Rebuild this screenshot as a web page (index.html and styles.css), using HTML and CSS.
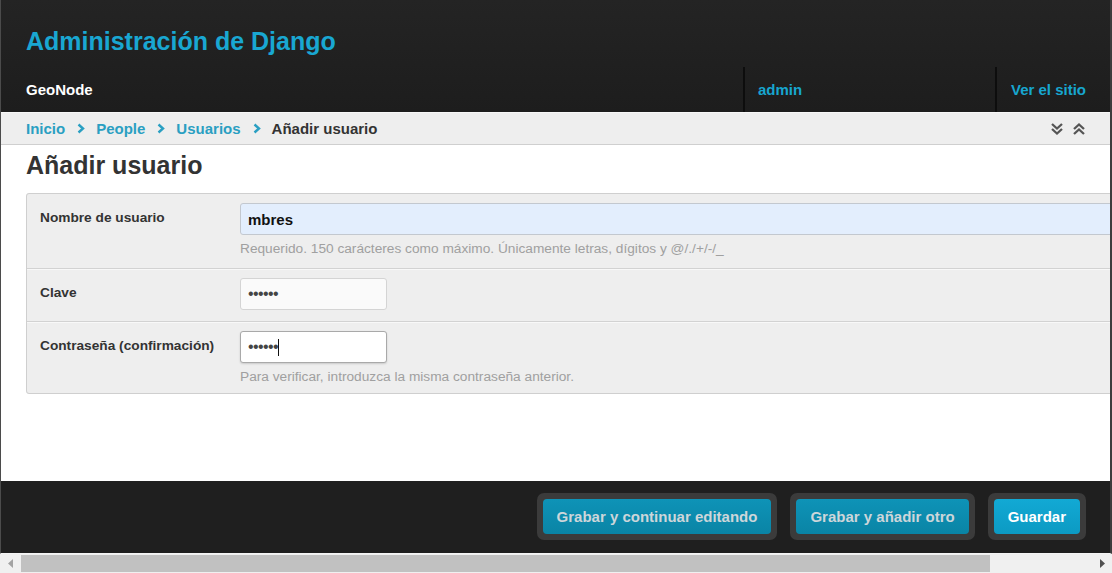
FILE: index.html
```html
<!DOCTYPE html>
<html lang="es">
<head>
<meta charset="utf-8">
<title>Añadir usuario | Administración de Django</title>
<link rel="stylesheet" href="styles.css">
</head>
<body>
<div class="window">
  <div class="frame">
    <header class="header">
      <div class="branding">
        <h1 class="site-name">Administración de Django</h1>
      </div>
      <nav class="nav">
        <div class="nav-home">GeoNode</div>
        <div class="nav-cell nav-user"><a href="#">admin</a></div>
        <div class="nav-cell nav-site"><a href="#">Ver el sitio</a></div>
      </nav>
    </header>

    <div class="breadcrumbs">
      <a href="#">Inicio</a>
      <svg class="sep" width="8" height="11" viewBox="0 0 8 11"><path d="M1.5 1.5 L6 5.5 L1.5 9.5" fill="none" stroke="#2a9fc2" stroke-width="2.4"/></svg>
      <a href="#">People</a>
      <svg class="sep" width="8" height="11" viewBox="0 0 8 11"><path d="M1.5 1.5 L6 5.5 L1.5 9.5" fill="none" stroke="#2a9fc2" stroke-width="2.4"/></svg>
      <a href="#">Usuarios</a>
      <svg class="sep" width="8" height="11" viewBox="0 0 8 11"><path d="M1.5 1.5 L6 5.5 L1.5 9.5" fill="none" stroke="#2a9fc2" stroke-width="2.4"/></svg>
      <span class="current">Añadir usuario</span>
      <div class="bc-tools">
        <svg width="14" height="14" viewBox="0 0 14 14"><path d="M2 2 L7 6.5 L12 2 M2 7 L7 11.5 L12 7" fill="none" stroke="#555" stroke-width="2.3"/></svg>
        <svg width="14" height="14" viewBox="0 0 14 14"><path d="M2 7 L7 2.5 L12 7 M2 12 L7 7.5 L12 12" fill="none" stroke="#555" stroke-width="2.3"/></svg>
      </div>
    </div>

    <main class="content">
      <h2 class="page-title">Añadir usuario</h2>
      <form class="form">
        <fieldset class="fieldset">
          <div class="row">
            <label class="label" for="u">Nombre de usuario</label>
            <div class="field">
              <input id="u" class="input input-wide" type="text" value="mbres">
              <div class="help">Requerido. 150 carácteres como máximo. Únicamente letras, dígitos y @/./+/-/_</div>
            </div>
          </div>
          <div class="row">
            <label class="label" for="p1">Clave</label>
            <div class="field">
              <input id="p1" class="input input-short" type="password" value="secret">
            </div>
          </div>
          <div class="row">
            <label class="label" for="p2">Contraseña (confirmación)</label>
            <div class="field">
              <div class="caret-wrap">
                <input id="p2" class="input input-short input-focus" type="password" value="secret">
                <span class="caret"></span>
              </div>
              <div class="help">Para verificar, introduzca la misma contraseña anterior.</div>
            </div>
          </div>
        </fieldset>
      </form>
    </main>

    <footer class="submit-row">
      <div class="btn-frame"><button type="button" class="btn">Grabar y continuar editando</button></div>
      <div class="btn-frame"><button type="button" class="btn">Grabar y añadir otro</button></div>
      <div class="btn-frame"><button type="button" class="btn btn-default">Guardar</button></div>
    </footer>
  </div>
  <div class="hscroll">
    <div class="sb-btn"><svg width="6" height="9" viewBox="0 0 6 9"><path d="M5 0 L0 4.5 L5 9 Z" fill="#a3a3a3"/></svg></div>
    <div class="sb-thumb"></div>
    <div class="sb-track"></div>
    <div class="sb-btn sb-right"><svg width="6" height="9" viewBox="0 0 6 9"><path d="M1 0 L6 4.5 L1 9 Z" fill="#505050"/></svg></div>
  </div>
</div>
</body>
</html>
```

FILE: styles.css
```css
* { box-sizing: border-box; }

html, body {
  margin: 0;
  padding: 0;
  background: #ffffff;
}

body {
  font-family: "Liberation Sans", Arial, sans-serif;
  color: #333;
}

.window {
  width: 1112px;
  height: 573px;
  overflow: hidden;
  display: flex;
  flex-direction: column;
}

.frame {
  height: 554px;
  border-left: 1px solid #4b4b4b;
  border-right: 2px solid #3d3d3d;
  display: flex;
  flex-direction: column;
  overflow: hidden;
  border-bottom: 1px solid #f4f4f4;
}

/* Header */
.header {
  background: linear-gradient(#242424, #1d1d1d);
  height: 112px;
  display: flex;
  flex-direction: column;
  flex-shrink: 0;
}

.branding {
  height: 67px;
  padding: 26px 0 0 25px;
}

.site-name {
  margin: 0;
  font-size: 25px;
  line-height: 30px;
  font-weight: bold;
  color: #19a7d2;
}

.nav {
  flex: 1;
  display: flex;
  align-items: stretch;
}

.nav-home {
  flex: 1;
  padding: 0 0 1px 25px;
  display: flex;
  align-items: center;
  color: #fff;
  font-weight: bold;
  font-size: 15px;
}

.nav-cell {
  display: flex;
  align-items: center;
  border-left: 2px solid #0d0d0d;
  font-size: 15px;
  font-weight: bold;
  padding-bottom: 1px;
}

.nav-cell a {
  color: #17a6cf;
  text-decoration: none;
}

.nav-user {
  width: 252px;
  padding-left: 13px;
}

.nav-site {
  width: 115px;
  padding-left: 14px;
}

/* Breadcrumbs */
.breadcrumbs {
  height: 33px;
  flex-shrink: 0;
  background: #eeeeee;
  border-top: 1px solid #f7f7f7;
  border-bottom: 1px solid #cfcfcf;
  display: flex;
  align-items: center;
  padding-left: 25px;
  font-size: 15px;
  font-weight: bold;
}

.breadcrumbs a {
  color: #2a9fc2;
  text-decoration: none;
}

.breadcrumbs .sep {
  margin: 0 11px 0 12px;
}

.breadcrumbs .current {
  color: #333;
}

.bc-tools {
  margin-left: auto;
  margin-right: 24px;
  display: flex;
  gap: 8px;
}

/* Content */
.content {
  flex: 1;
  background: #fff;
  padding: 6px 0 0 25px;
}

.page-title {
  margin: 0 0 14px 0;
  font-size: 25px;
  line-height: 28px;
  font-weight: bold;
  color: #333;
}

.form {
  margin-right: -80px;
}

.fieldset {
  margin: 0;
  padding: 0;
  border: 1px solid #cfcfcf;
  border-radius: 3px;
  background: #eeeeee;
  min-inline-size: 0;
}

.row {
  display: flex;
  padding: 9px 13px 11px;
  border-bottom: 1px solid #d2d2d2;
  box-shadow: 0 1px 0 #f8f8f8;
}

.row:last-child {
  border-bottom: none;
  box-shadow: none;
  padding-top: 9px;
  padding-bottom: 8px;
}

.label {
  width: 200px;
  flex-shrink: 0;
  font-size: 13.7px;
  font-weight: bold;
  line-height: 30px;
  color: #333;
}

.field {
  flex: 1;
}

.input {
  display: block;
  height: 32px;
  border: 1px solid #d4d4d4;
  border-radius: 3px;
  background: #fafafa;
  font-family: "Liberation Sans", Arial, sans-serif;
  font-size: 14px;
  color: #333;
  padding: 0 7px;
  outline: none;
}

.input-wide {
  width: 100%;
  background: #e3eefd;
  border-color: #c3c8cf;
  color: #111;
  font-weight: bold;
  font-size: 15px;
}

.input-short {
  width: 147px;
  font-size: 16px;
  letter-spacing: -0.6px;
  color: #444;
}

.input-focus {
  background: #fff;
  border-color: #a9a9a9;
  box-shadow: 0 1px 2px rgba(0,0,0,0.15);
}

.caret-wrap {
  position: relative;
  width: 147px;
}

.caret {
  position: absolute;
  left: 38px;
  top: 8px;
  width: 1px;
  height: 17px;
  background: #111;
}

.help {
  margin-top: 6px;
  font-size: 13.7px;
  line-height: 16px;
  color: #a0a0a0;
}

/* Submit row */
.submit-row {
  height: 72px;
  flex-shrink: 0;
  background: #1f1f1f;
  display: flex;
  justify-content: flex-end;
  align-items: center;
  gap: 13px;
  padding-right: 24px;
  padding-bottom: 1px;
}

.btn-frame {
  background: #3b3b3b;
  border-radius: 7px;
  padding: 6px;
}

.btn {
  display: block;
  height: 35px;
  border: none;
  border-radius: 4px;
  padding: 0 14px;
  background: linear-gradient(#0e93b7, #0a84a5);
  color: #cdd6da;
  font-family: "Liberation Sans", Arial, sans-serif;
  font-size: 15px;
  font-weight: bold;
  cursor: pointer;
}

.btn-default {
  background: linear-gradient(#12a9d4, #0c9ac3);
  color: #fff;
}

/* Fake horizontal scrollbar */
.hscroll {
  height: 19px;
  display: flex;
  background: #f0f0f0;
}

.sb-btn {
  width: 21px;
  display: flex;
  align-items: center;
  justify-content: center;
}

.sb-thumb {
  width: 969px;
  background: #c1c1c1;
  margin: 1px 0;
}

.sb-track {
  flex: 1;
}
```
